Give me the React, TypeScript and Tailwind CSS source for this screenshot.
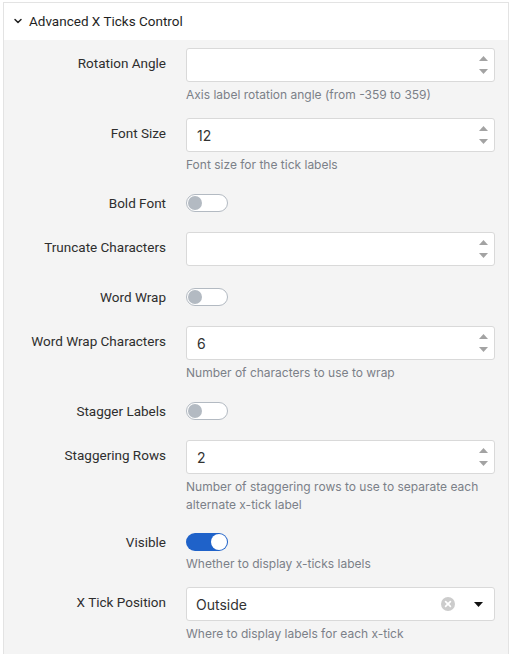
import { ChevronDown } from 'lucide-react';

type Row =
  | { kind: 'number'; label: string; value?: string; help?: string[] }
  | { kind: 'toggle'; label: string; on?: boolean; help?: string[] }
  | { kind: 'select'; label: string; value: string; help?: string[] };

const rows: Row[] = [
  { kind: 'number', label: 'Rotation Angle', help: ['Axis label rotation angle (from -359 to 359)'] },
  { kind: 'number', label: 'Font Size', value: '12', help: ['Font size for the tick labels'] },
  { kind: 'toggle', label: 'Bold Font' },
  { kind: 'number', label: 'Truncate Characters' },
  { kind: 'toggle', label: 'Word Wrap' },
  { kind: 'number', label: 'Word Wrap Characters', value: '6', help: ['Number of characters to use to wrap'] },
  { kind: 'toggle', label: 'Stagger Labels' },
  {
    kind: 'number',
    label: 'Staggering Rows',
    value: '2',
    help: ['Number of staggering rows to use to separate each', 'alternate x-tick label'],
  },
  { kind: 'toggle', label: 'Visible', on: true, help: ['Whether to display x-ticks labels'] },
  { kind: 'select', label: 'X Tick Position', value: 'Outside', help: ['Where to display labels for each x-tick'] },
];

const labelFont = { fontFamily: 'Roboto, "Liberation Sans", sans-serif' };

function Help({ lines, tight }: { lines?: string[]; tight?: boolean }) {
  if (!lines) return null;
  return (
    <div className={`${tight ? '-mt-[1px]' : 'mt-1'} text-[12px] leading-[18px] text-[#7b8088]`}>
      {lines.map((l) => (
        <div key={l}>{l}</div>
      ))}
    </div>
  );
}

function Spinner() {
  return (
    <div className="flex flex-col items-center gap-[8px] pr-[2px]">
      <svg width="9" height="5" viewBox="0 0 9 5">
        <path d="M4.5 0L9 5H0z" fill="#a3a3a3" />
      </svg>
      <svg width="9" height="5" viewBox="0 0 9 5">
        <path d="M0 0h9L4.5 5z" fill="#a3a3a3" />
      </svg>
    </div>
  );
}

function Toggle({ on }: { on?: boolean }) {
  return on ? (
    <div className="flex h-[18px] w-[42px] items-center justify-end rounded-full bg-[#1f62c9] pr-[1px]">
      <div className="h-[16px] w-[16px] rounded-full bg-white" />
    </div>
  ) : (
    <div className="flex h-[18px] w-[42px] items-center rounded-full border border-[#b3bac2] bg-white pl-[1px]">
      <div className="h-[14px] w-[14px] rounded-full bg-[#b3bac2]" />
    </div>
  );
}

function Control({ row }: { row: Row }) {
  if (row.kind === 'toggle') {
    return (
      <div>
        <div className={`flex items-center ${row.help ? 'h-[28px]' : 'h-[30px]'}`}>
          <Toggle on={row.on} />
        </div>
        <Help lines={row.help} tight />
      </div>
    );
  }
  if (row.kind === 'select') {
    return (
      <div>
        <div className="flex h-[34px] items-center rounded-[3px] border border-[#d9d9d9] bg-white pl-[9px] pr-[11px]">
          <span className="flex-1 text-[14px] text-[#333]">{row.value}</span>
          <svg width="14" height="14" viewBox="0 0 14 14" className="mr-[19px]">
            <circle cx="7" cy="7" r="7" fill="#cccccc" />
            <path d="M4.6 4.6l4.8 4.8M9.4 4.6l-4.8 4.8" stroke="#fff" strokeWidth="1.7" strokeLinecap="round" />
          </svg>
          <svg width="9" height="5" viewBox="0 0 9 5">
            <path d="M0 0h9L4.5 5z" fill="#111" />
          </svg>
        </div>
        <Help lines={row.help} />
      </div>
    );
  }
  return (
    <div className={row.help ? '' : 'pb-[2px]'}>
      <div className="flex h-[34px] items-center rounded-[3px] border border-[#d9d9d9] bg-white pl-[10px] pr-[4px]">
        <span className="flex-1 text-[14px] text-[#333]">{row.value ?? ''}</span>
        <Spinner />
      </div>
      <Help lines={row.help} />
    </div>
  );
}

export default function App() {
  return (
    <div className="min-h-[654px] bg-white pl-[3px] pt-[2px]" style={{ fontFamily: 'Inter, "Noto Sans", sans-serif' }}>
      <div className="w-[506px] border-x border-t border-[#e3e3e3]">
        {/* Section header */}
        <div
          className="flex h-[37px] items-center gap-[5px] bg-white pb-[1px] pl-[8px] text-[13.5px] text-[#1f1f1f]"
          style={labelFont}
        >
          <ChevronDown size={12} strokeWidth={3} className="text-[#222]" />
          <span>Advanced X Ticks Control</span>
        </div>

        {/* Form rows */}
        <div className="flex min-h-[615px] flex-col gap-[14px] bg-[#f4f4f4] pb-[14px] pr-[13px] pt-[8px]">
          {rows.map((row) => (
            <div key={row.label} className="grid grid-cols-[162px_1fr] gap-x-[20px]">
              <div
                className={`text-right text-[13.5px] text-[#2e2e2e] ${
                  row.kind === 'toggle' ? (row.help ? 'leading-[28px]' : 'leading-[30px]') : 'leading-[31px]'
                }`}
                style={labelFont}
              >
                {row.label}
              </div>
              <Control row={row} />
            </div>
          ))}
        </div>
      </div>
    </div>
  );
}
